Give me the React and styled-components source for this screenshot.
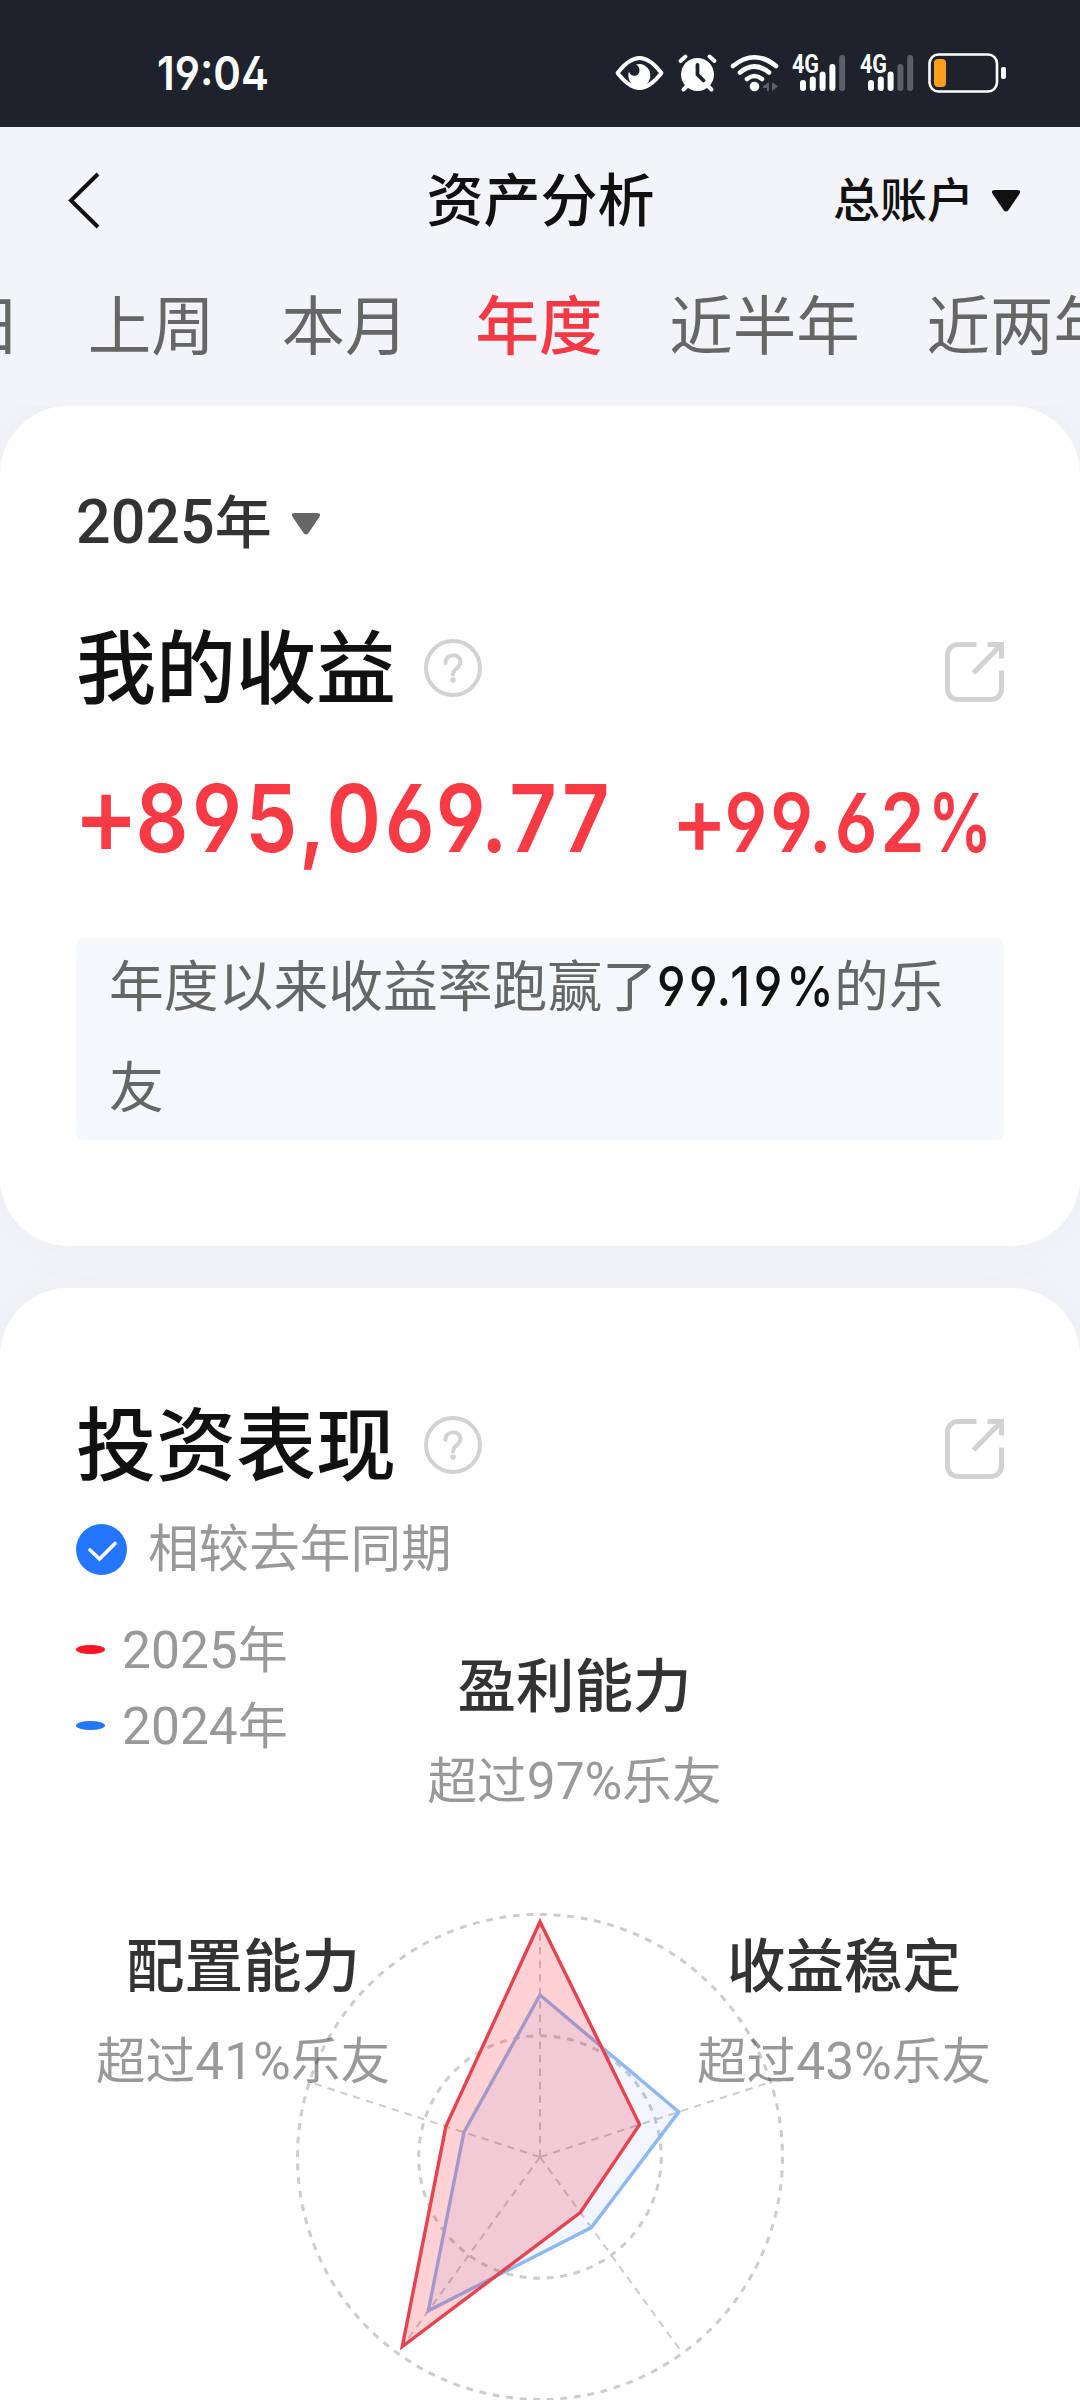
import styled, { createGlobalStyle } from 'styled-components';

const TABS = ['昨日', '上周', '本月', '年度', '近半年', '近两年'];

const CENTER = 245;
const RADIUS = 242.5;
const THIS_YEAR = [0.97, 0.432, 0.283, 0.966, 0.408];
const LAST_YEAR = [0.668, 0.602, 0.36, 0.784, 0.33];

const getPoint = (ratio, index) => {
  const angle = (index * 72 * Math.PI) / 180;
  const x = CENTER + Math.sin(angle) * RADIUS * ratio;
  const y = CENTER - Math.cos(angle) * RADIUS * ratio;
  return [x.toFixed(1), y.toFixed(1)];
};

const getPolygon = values =>
  values.map((value, index) => getPoint(value, index).join(',')).join(' ');

const StatusIcons = () => (
  <svg width="400" height="50" viewBox="610 48 400 50" fill="none">
    <path
      d="M617.500 73C633 53 646 53 661.500 73C646 93 633 93 617.500 73Z"
      stroke="#fff"
      strokeWidth="3.800"
      strokeLinejoin="round"
    />
    <path
      d="M636 64.500a11 11.500 0 1 1-7 7a5.500 5.500 0 0 0 9 3a6.500 6.500 0 0 0-2-10Z"
      fill="#fff"
    />
    <circle cx="697.500" cy="74.500" r="16.500" fill="#fff" />
    <path
      d="M680.500 61l5-4.500M714.500 61l-5-4.500M687 86l-3.500 3.500M708 86l3.500 3.500"
      stroke="#fff"
      strokeWidth="4"
      strokeLinecap="round"
    />
    <path
      d="M697.500 65v9.500l6 6"
      stroke="#1e222d"
      strokeWidth="3.800"
      strokeLinecap="round"
    />
    <path
      d="M733 66Q754.500 48.500 776 66M740 72.500Q754.500 60.500 769 72.500M747 79Q754.500 73 762 79"
      stroke="#fff"
      strokeWidth="4.600"
      strokeLinecap="round"
    />
    <circle cx="754.500" cy="86.500" r="4.800" fill="#fff" />
    <path d="M769 82v9h-2v-3h-4v-2zM772 82l6 4.500-6 4.500z" fill="#5d5f68" />
    <Signal x={803} bars={4} />
    <Signal x={871} bars={3} />
    <rect
      x="929.500"
      y="54.500"
      width="67.500"
      height="37"
      rx="9"
      stroke="#fff"
      strokeWidth="2.600"
    />
    <rect x="934" y="59" width="12" height="28" rx="4" fill="#fb9f1c" />
    <rect x="1001" y="67" width="5" height="12" rx="2" fill="#fff" />
  </svg>
);

const Signal = ({ x, bars }) => (
  <g>
    <text
      x={x - 11}
      y="73"
      fill="#fff"
      fontFamily="Roboto"
      fontWeight="700"
      fontSize="25"
      textLength="27"
      lengthAdjust="spacingAndGlyphs"
    >
      4G
    </text>
    {[80, 76.5, 71.5, 64, 55].map((top, index) => (
      <rect
        key={top}
        x={x - 3 + index * 9.8}
        y={top}
        width="6"
        height={91 - top}
        rx="3"
        fill={index < bars ? '#fff' : '#5d5f68'}
      />
    ))}
  </g>
);

const Caret = ({ color }) => (
  <CaretIcon width="30" height="24" viewBox="0 0 30 24">
    <path
      d="M4 1h22q5 0 2 4.500L17.500 21q-2.500 3-5 0L2 5.500Q-1 1 4 1Z"
      fill={color}
    />
  </CaretIcon>
);

const HelpIcon = () => (
  <svg width="60" height="60" viewBox="0 0 60 60" fill="none">
    <circle cx="30" cy="30" r="27" stroke="#d2d2d2" strokeWidth="4" />
    <path
      d="M22.500 25c0-10 15-10 15-1 0 6-7.500 6-7.500 12.500"
      stroke="#d2d2d2"
      strokeWidth="4"
      strokeLinecap="round"
    />
    <circle cx="30" cy="42" r="2.800" fill="#d2d2d2" />
  </svg>
);

const ShareIcon = () => (
  <svg width="59" height="60" viewBox="0 0 59 60" fill="none">
    <path
      d="M31.500 2.500H13A10.500 10.500 0 0 0 2.500 13v34A10.500 10.500 0 0 0 13 57.500h33A10.500 10.500 0 0 0 56.500 47V28.500M42.500 2.500h14v14M55 4L28.500 31"
      stroke="#d2d2d2"
      strokeWidth="5"
    />
  </svg>
);

const RadarChart = () => (
  <Radar width="490" height="490" viewBox="0 0 490 490" fill="none">
    <g stroke="#ccc">
      <circle
        cx={CENTER}
        cy={CENTER}
        r={RADIUS}
        strokeWidth="3"
        strokeDasharray="6.800 6.800"
      />
      <circle
        cx={CENTER}
        cy={CENTER}
        r={RADIUS / 2}
        strokeWidth="3"
        strokeDasharray="6.800 6.800"
      />
      {THIS_YEAR.map((value, index) => {
        const [x, y] = getPoint(1, index);
        return (
          <line
            key={index}
            x1={CENTER}
            y1={CENTER}
            x2={x}
            y2={y}
            strokeWidth="2"
            strokeDasharray="7.500 6"
          />
        );
      })}
    </g>
    <polygon
      points={getPolygon(LAST_YEAR)}
      fill="rgba(36, 117, 255, 0.07)"
      stroke="#8fb7f3"
      strokeWidth="3.400"
    />
    <polygon
      points={getPolygon(THIS_YEAR)}
      fill="rgba(250, 30, 45, 0.2)"
      stroke="#e5434f"
      strokeWidth="3.400"
    />
  </Radar>
);

const Ability = ({ name, value, width }) => (
  <Label $width={width}>
    <LabelName>{name}</LabelName>
    <LabelValue>
      超过<Num $size={51.5}>{value}</Num>乐友
    </LabelValue>
  </Label>
);

const App = () => {
  return (
    <>
      <GlobalStyle />
      <Page>
        <StatusBar>
          <Time>19:04</Time>
          <StatusIcons />
        </StatusBar>
        <Header>
          <Back width="40" height="60" viewBox="0 0 40 60" fill="none">
            <path d="M32 4L5 30.500 32 57" stroke="#111" strokeWidth="4" />
          </Back>
          <Title>资产分析</Title>
          <Account>
            总账户
            <Caret color="#111" />
          </Account>
        </Header>
        <Tabs>
          {TABS.map(tab => (
            <Tab key={tab} $active={tab === '年度'}>
              {tab}
            </Tab>
          ))}
        </Tabs>
        <Cards>
          <Card $height={840}>
            <YearPicker>
              <span>
                <Num $size={61}>2025</Num>年
              </span>
              <Caret color="#666" />
            </YearPicker>
            <CardHead>
              <CardTitle>我的收益</CardTitle>
              <HelpIcon />
              <ShareIcon />
            </CardHead>
            <Profit>
              <Amount $size={94} $width={531}>
                <Plus>+</Plus>895,069.77
              </Amount>
              <Amount $size={80.5} $width={316}>
                <Plus>+</Plus>99.62<Percent>%</Percent>
              </Amount>
            </Profit>
            <Notice>
              <NoticeText>
                年度以来收益率跑赢了<Rank>99.19%</Rank>的乐友
              </NoticeText>
            </Notice>
          </Card>
          <Card $height={1180}>
            <CardHead $second>
              <CardTitle>投资表现</CardTitle>
              <HelpIcon />
              <ShareIcon />
            </CardHead>
            <Compare>
              <svg width="51" height="51" viewBox="0 0 51 51" fill="none">
                <circle cx="25.500" cy="25.500" r="25.500" fill="#2475ff" />
                <path
                  d="M14 26l9.500 9L39 19.500"
                  stroke="#fff"
                  strokeWidth="3.600"
                  strokeLinecap="round"
                />
              </svg>
              <CompareText>相较去年同期</CompareText>
            </Compare>
            <Performance>
              <RadarChart />
              <Row>
                <Legend>
                  <LegendItem $color="#fa1624">
                    <span>
                      <Num $size={51.5}>2025</Num>年
                    </span>
                  </LegendItem>
                  <LegendItem $color="#2475ff">
                    <span>
                      <Num $size={51.5}>2024</Num>年
                    </span>
                  </LegendItem>
                </Legend>
                <Ability name="盈利能力" value="97%" width={329} />
              </Row>
              <Row>
                <Ability name="配置能力" value="41%" width={334} />
                <Ability name="收益稳定" value="43%" width={320} />
              </Row>
            </Performance>
          </Card>
        </Cards>
      </Page>
    </>
  );
};

export default App;

const GlobalStyle = createGlobalStyle`
  * {
    box-sizing: border-box;
  }
  body {
    margin: 0;
    font-family: 'Noto Sans CJK SC', sans-serif;
    overflow: hidden;
  }
  svg {
    display: block;
    flex-shrink: 0;
  }
`;
const Page = styled.div`
  width: 1080px;
  height: 2400px;
  overflow: hidden;
  background: #f3f4f9;
`;
const StatusBar = styled.div`
  display: flex;
  justify-content: space-between;
  align-items: center;
  height: 127px;
  padding: 19px 70px 0 157px;
  background: #1e222d;
`;
const Time = styled.span`
  color: #fff;
  font-family: Inter, sans-serif;
  font-feature-settings: 'ss01', 'cv03', 'cv04';
  font-size: 46px;
  font-weight: 600;
  transform: scaleX(0.91);
  transform-origin: left;
`;
const Header = styled.header`
  display: grid;
  grid-template-columns: 1fr auto 1fr;
  align-items: center;
  height: 146px;
  padding: 0 59px 6px 64px;
`;
const Back = styled.svg`
  margin: 6px 0 0 2px;
`;
const Title = styled.h1`
  margin: -3px 4px 0 0;
  color: #111;
  font-size: 57px;
  line-height: 80px;
  font-weight: 500;
`;
const Account = styled.div`
  display: flex;
  justify-content: flex-end;
  align-items: center;
  gap: 17px;
  color: #111;
  font-size: 47px;
  line-height: 80px;
  font-weight: 500;
`;
const CaretIcon = styled.svg`
  margin-top: 8px;
`;
const Tabs = styled.nav`
  display: flex;
  gap: 66.800px;
  height: 133px;
  padding-top: 3px;
  margin-left: -106px;
  white-space: nowrap;
`;
const Tab = styled.span`
  color: ${({ $active }) => ($active ? '#f33a44' : '#666')};
  font-size: 63.500px;
  line-height: 90px;
  font-weight: ${({ $active }) => ($active ? 500 : 400)};
`;
const Cards = styled.main`
  display: flex;
  flex-direction: column;
  gap: 42px;
  height: 1994px;
  overflow: hidden;
`;
const Card = styled.section`
  flex-shrink: 0;
  height: ${({ $height }) => $height}px;
  padding: 0 76px;
  border-radius: 68px;
  background: #fff;
  box-shadow: 0 0 60px rgba(20, 20, 20, 0.035);
`;
const Num = styled.span`
  font-family: Roboto, sans-serif;
  font-size: ${({ $size }) => $size}px;
`;
const YearPicker = styled.div`
  display: flex;
  align-items: center;
  gap: 19px;
  height: 80px;
  margin-top: 74px;
  color: #333;
  font-size: 57px;
  line-height: 80px;
  font-weight: 500;
`;
const CardHead = styled.div`
  display: flex;
  align-items: center;
  gap: 27px;
  height: 110px;
  margin-top: ${({ $second }) => ($second ? 102 : 53)}px;

  svg:last-child {
    margin-left: auto;
    margin-top: 7px;
  }
`;
const CardTitle = styled.h2`
  margin: -12px 0 0;
  color: #111;
  font-size: 80px;
  line-height: 110px;
  font-weight: 500;
`;
const Profit = styled.div`
  display: flex;
  justify-content: space-between;
  align-items: baseline;
  height: 124px;
  margin-top: 40px;
  padding-right: 17px;
`;
const Amount = styled.span`
  width: ${({ $width }) => $width}px;
  margin-left: -3px;
  color: #f73a44;
  font-family: Inter, sans-serif;
  font-feature-settings: 'ss01', 'cv03', 'cv04';
  font-size: ${({ $size }) => $size}px;
  line-height: 110px;
  font-weight: 600;
  letter-spacing: 0.043em;
  white-space: nowrap;
  transform: scaleX(0.88);
  transform-origin: left;
`;
const Plus = styled.span`
  margin-right: -0.075em;
  font-size: 1.2em;
  line-height: 0;
  vertical-align: -0.02em;
  font-weight: 500;
`;
const Percent = styled.span`
  display: inline-block;
  transform: scaleX(0.9);
  transform-origin: left;
`;
const Notice = styled.div`
  margin-top: 51px;
  height: 202px;
  padding: 0 33px;
  border-radius: 8px;
  background: #f4f8fb;
`;
const NoticeText = styled.p`
  margin: 0 0 0 0;
  transform: translateY(-6px);
  color: #666;
  font-size: 54.800px;
  line-height: 101px;
`;
const Rank = styled.b`
  display: inline-block;
  width: 177px;
  line-height: 80px;
  color: #111;
  font-family: Inter, sans-serif;
  font-feature-settings: 'ss01', 'cv03', 'cv04';
  font-weight: 500;
  letter-spacing: 4px;
  transform: scaleX(0.88);
  transform-origin: left;
`;
const Compare = styled.div`
  display: flex;
  align-items: center;
  gap: 21px;
  height: 80px;
  margin-top: 9px;
`;
const CompareText = styled.span`
  margin-top: -8px;
  color: #999;
  font-size: 50.600px;
  line-height: 72px;
`;
const Performance = styled.div`
  position: relative;
  margin-top: 22px;
`;
const Radar = styled.svg`
  position: absolute;
  left: 219px;
  top: 301px;
`;
const Row = styled.div`
  position: relative;
  display: flex;
  justify-content: space-between;
  height: 280px;
`;
const Legend = styled.div`
  width: 334px;
`;
const LegendItem = styled.div`
  display: flex;
  align-items: center;
  gap: 17px;
  height: 76px;
  color: #999;
  font-size: 50px;
  line-height: 72px;

  span {
    margin-top: -2px;
  }

  &::before {
    content: '';
    width: 29px;
    height: 9px;
    border-radius: 50%;
    background: ${({ $color }) => $color};
  }
`;
const Label = styled.div`
  display: flex;
  flex-direction: column;
  align-items: center;
  width: ${({ $width }) => $width}px;
  padding-top: 23px;
  white-space: nowrap;

  ${Legend} + & {
    margin-right: auto;
  }
`;
const LabelName = styled.span`
  color: #333;
  font-size: 58.500px;
  line-height: 96px;
  font-weight: 500;
`;
const LabelValue = styled.span`
  color: rgba(0, 0, 0, 0.4);
  font-size: 49.600px;
  line-height: 94px;
`;
